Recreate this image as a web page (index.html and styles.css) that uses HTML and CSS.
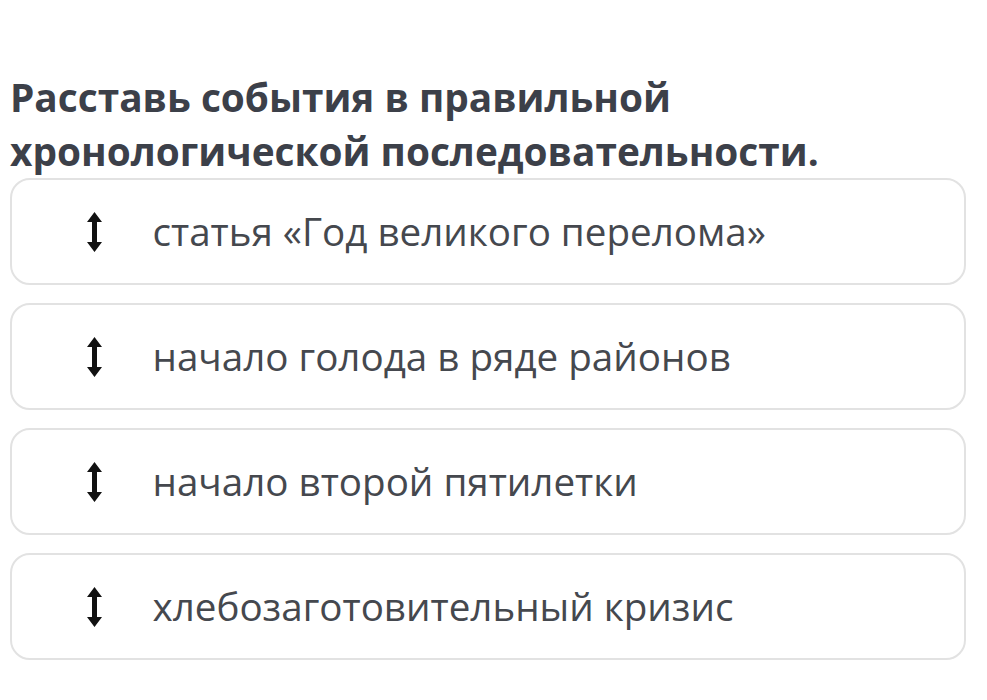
FILE: index.html
```html
<!DOCTYPE html>
<html lang="ru">
<head>
<meta charset="utf-8">
<link rel="stylesheet" href="styles.css">
</head>
<body>
<div class="page">
  <h1 class="title">Расставь события в правильной хронологической последовательности.</h1>
  <ul class="list">
    <li class="item"><span class="handle"><svg viewBox="0 0 15 40" width="15" height="40"><path d="M7.5 0 L15 10 H10 V30 H15 L7.5 40 L0 30 H5 V10 H0 Z" fill="#111"/></svg></span><span class="label">статья «Год великого перелома»</span></li>
    <li class="item"><span class="handle"><svg viewBox="0 0 15 40" width="15" height="40"><path d="M7.5 0 L15 10 H10 V30 H15 L7.5 40 L0 30 H5 V10 H0 Z" fill="#111"/></svg></span><span class="label">начало голода в ряде районов</span></li>
    <li class="item"><span class="handle"><svg viewBox="0 0 15 40" width="15" height="40"><path d="M7.5 0 L15 10 H10 V30 H15 L7.5 40 L0 30 H5 V10 H0 Z" fill="#111"/></svg></span><span class="label">начало второй пятилетки</span></li>
    <li class="item"><span class="handle"><svg viewBox="0 0 15 40" width="15" height="40"><path d="M7.5 0 L15 10 H10 V30 H15 L7.5 40 L0 30 H5 V10 H0 Z" fill="#111"/></svg></span><span class="label">хлебозаготовительный кризис</span></li>
  </ul>
</div>
</body>
</html>
```
FILE: styles.css
```css
html, body {
  margin: 0;
  padding: 0;
  background: #ffffff;
}
.page {
  font-family: "Open Sans", "Noto Sans", sans-serif;
  padding: 70px 21px 0 10px;
}
.title {
  margin: 0;
  font-size: 38.8px;
  line-height: 54px;
  font-weight: 700;
  color: #3c4049;
}
.list {
  list-style: none;
  margin: 0;
  padding: 0;
  display: flex;
  flex-direction: column;
  gap: 18px;
}
.item {
  height: 107px;
  box-sizing: border-box;
  border: 2.5px solid #e2e2e2;
  border-radius: 20px;
  display: flex;
  align-items: center;
  padding-left: 74.5px;
}
.handle {
  display: flex;
  width: 15px;
  height: 40px;
  margin-right: 51px;
}
.label {
  font-size: 38.6px;
  color: #45484e;
  line-height: 1.2;
}
```
